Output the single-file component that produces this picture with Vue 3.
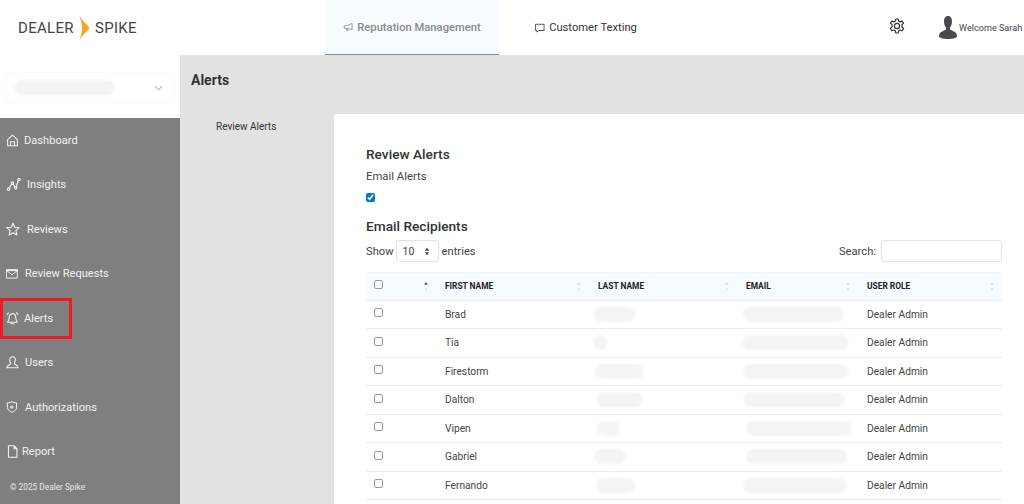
<template>
  <div class="page">
    <header class="topbar">
      <div class="logo">
        <span class="logo-left">DEALER</span>
        <svg class="logo-mark" viewBox="0 0 12 26" width="12" height="26">
          <path d="M1 0 C3 5 9 9 11.5 13 C9 17 3 21 1 26 C3 20 4 17 4 13 C4 9 3 6 1 0Z" fill="#f5a623" />
        </svg>
        <span>SPIKE</span>
      </div>
      <nav class="tabs">
        <a class="tab active">
          <svg viewBox="0 0 16 16" width="10" height="10" class="line">
            <path d="M14.5 3 V12 L5 10 H2 V6 H5 Z M5 10.5 L6 13.5 H8 L7.5 11" />
          </svg>
          Reputation Management
        </a>
        <a class="tab">
          <svg viewBox="0 0 16 16" width="10" height="10" class="line">
            <path d="M1.5 2 H14.5 V12 H6 L3 14.5 V12 H1.5 Z" />
          </svg>
          Customer Texting
        </a>
      </nav>
      <svg class="gear" viewBox="0 0 16 16" width="16" height="16">
        <circle cx="8" cy="8" r="2.6" />
        <path d="M6.8 1 H9.2 L9.6 3 L11.3 3.9 L13.2 3.1 L14.5 5.2 L13 6.6 V8.9 L14.6 10.5 L13.2 12.8 L11.3 12 L9.6 13 L9.2 15 H6.8 L6.4 13 L4.7 12 L2.8 12.8 L1.4 10.5 L3 8.9 V6.6 L1.5 5.2 L2.8 3.1 L4.7 3.9 L6.4 3 Z" />
      </svg>
      <div class="user">
        <svg viewBox="0 0 18 23" width="18" height="23">
          <path d="M9 0 C12 0 13 2.5 13 5.5 C13 8.5 11.8 10.5 11 11.5 V13.5 C13 15 18 15.5 18 20 C18 22 14 23 9 23 C4 23 0 22 0 20 C0 15.5 5 15 7 13.5 V11.5 C6.2 10.5 5 8.5 5 5.5 C5 2.5 6 0 9 0Z" fill="#4a4a4a" />
        </svg>
        <span>Welcome Sarah</span>
      </div>
    </header>

    <div class="body">
      <aside class="sidebar">
        <div class="dealer-pick">
          <div class="dealer-box">
            <span class="smudge dealer-smudge"></span>
            <svg viewBox="0 0 10 6" width="9" height="6" class="caret"><path d="M1 1 L5 5 L9 1" /></svg>
          </div>
        </div>
        <nav class="menu">
          <a v-for="item in menu" :key="item.label" class="menu-item" :style="{ gap: item.gap + 'px' }">
            <svg viewBox="0 0 16 16" :width="item.size" :height="item.size" class="line menu-icon">
              <path :d="item.icon" />
            </svg>
            {{ item.label }}
          </a>
          <div class="copyright">© 2025 Dealer Spike</div>
          <div class="highlight"></div>
        </nav>
      </aside>

      <main class="main">
        <h1 class="title">Alerts</h1>
        <div class="split">
          <div class="subnav">Review Alerts</div>
          <section class="card">
            <h2>Review Alerts</h2>
            <div class="label">Email Alerts</div>
            <input type="checkbox" class="check-on" checked />
            <h2 class="h-second">Email Recipients</h2>
            <div class="controls">
              <div class="show">
                <span>Show</span>
                <div class="length"><span>10</span>
                  <svg viewBox="0 0 8 12" width="6" height="9"><path d="M4 1 L7 5 H1Z M4 11 L1 7 H7Z" fill="#444" /></svg>
                </div>
                <span>entries</span>
              </div>
              <div class="search">Search: <div class="search-box"></div></div>
            </div>
            <div class="table">
              <div class="row head">
                <div class="cell">
                  <span class="box"></span>
                  <svg class="sort first" viewBox="0 0 4 10"><path d="M2 0 L4 3 H0Z" /><path class="down" d="M2 10 L0 7 H4Z" /></svg>
                </div>
                <div v-for="h in heads" :key="h" class="cell">
                  {{ h }}
                  <svg class="sort" viewBox="0 0 4 10"><path d="M2 0 L4 3 H0Z" /><path class="down" d="M2 10 L0 7 H4Z" /></svg>
                </div>
              </div>
              <div v-for="r in rows" :key="r.name" class="row">
                <div class="cell"><span class="box"></span></div>
                <div class="cell">{{ r.name }}</div>
                <div class="cell"><span class="smudge" :style="{ width: r.last + 'px', marginLeft: r.lastX + 'px' }"></span></div>
                <div class="cell"><span class="smudge" :style="{ width: r.email + 'px', marginLeft: r.emailX + 'px' }"></span></div>
                <div class="cell">Dealer Admin</div>
              </div>
            </div>
          </section>
        </div>
      </main>
    </div>
  </div>
</template>

<script setup>
const menu = [
  { label: 'Dashboard', gap: 5, size: 13, icon: 'M2 7 L8 1.5 L14 7 V14.5 H2 Z M5.5 14.5 V9.5 H10.5 V14.5' },
  { label: 'Insights', gap: 6, size: 15, icon: 'M1.5 13 a1.3 1.3 0 1 0 2.6 0 a1.3 1.3 0 1 0 -2.6 0 M3.5 11.8 L5.8 7.8 M5.5 6.5 a1.3 1.3 0 1 0 2.6 0 a1.3 1.3 0 1 0 -2.6 0 M7.6 7.6 L9.6 10.4 M9 11.5 a1.3 1.3 0 1 0 2.6 0 a1.3 1.3 0 1 0 -2.6 0 M11 10.4 L13 4 M12.5 2.7 a1.3 1.3 0 1 0 2.6 0 a1.3 1.3 0 1 0 -2.6 0' },
  { label: 'Reviews', gap: 7, size: 14, icon: 'M8 1.5 L10 6 L15 6.5 L11.3 9.8 L12.4 14.8 L8 12.2 L3.6 14.8 L4.7 9.8 L1 6.5 L6 6 Z' },
  { label: 'Review Requests', gap: 7, size: 12, icon: 'M1 2.5 H15 V13.5 H1 Z M1 3.5 L8 9 L15 3.5 M1 2.5 H15 M1 3.5 H15' },
  { label: 'Alerts', gap: 5, size: 13, icon: 'M8 2 C11 2 12 4.5 12 7 C12 10 13.5 11 14 12.5 H2 C2.5 11 4 10 4 7 C4 4.5 5 2 8 2Z M6 14.5 H10 M3 1 L1.5 3 M13 1 L14.5 3' },
  { label: 'Users', gap: 6, size: 13, icon: 'M8 1 C10.5 1 11.5 3 11.5 5 C11.5 7 10.5 8.5 10 9.5 C11 11 15 11 15 14.5 H1 C1 11 5 11 6 9.5 C5.5 8.5 4.5 7 4.5 5 C4.5 3 5.5 1 8 1Z' },
  { label: 'Authorizations', gap: 7, size: 12, icon: 'M2 2.5 C5 2.5 6 2 8 1 C10 2 11 2.5 14 2.5 V9 C14 12 11 14 8 15 C5 14 2 12 2 9 Z M6.8 6.8 H9.2 V9.2 H6.8 Z' },
  { label: 'Report', gap: 3, size: 13, icon: 'M3 1 H10 L13.5 4.5 V15 H3 Z M10 1 V4.5 H13.5' }
]

const heads = ['FIRST NAME', 'LAST NAME', 'EMAIL', 'USER ROLE']

const rows = [
  { name: 'Brad', last: 41, lastX: -4, email: 101, emailX: -3 },
  { name: 'Tia', last: 13, lastX: -4, email: 106, emailX: -4 },
  { name: 'Firestorm', last: 49, lastX: -3, email: 105, emailX: -3 },
  { name: 'Dalton', last: 47, lastX: -2, email: 101, emailX: -2 },
  { name: 'Vipen', last: 23, lastX: -1, email: 106, emailX: 0 },
  { name: 'Gabriel', last: 32, lastX: -4, email: 101, emailX: 0 },
  { name: 'Fernando', last: 39, lastX: -2, email: 104, emailX: -3 }
]
</script>

<style>
html, body { margin: 0; height: 100%; overflow: hidden; }
</style>

<style scoped>
.page {
  width: 1024px;
  height: 504px;
  overflow: hidden;
  display: flex;
  flex-direction: column;
  font-family: Roboto, "Liberation Sans", sans-serif;
  color: #444;
  background: #fff;
}

.topbar {
  height: 55px;
  flex: none;
  display: flex;
  align-items: center;
  background: #fff;
}
.logo {
  width: 325px;
  flex: none;
  box-sizing: border-box;
  padding-left: 18px;
  display: flex;
  align-items: center;
  font-size: 15px;
  letter-spacing: .3px;
  color: #444;
}
.logo-left { width: 60px; }
.logo-mark { margin-right: 5px; }
.tabs { display: flex; height: 100%; flex: none; }
.tab {
  display: flex;
  align-items: center;
  justify-content: center;
  gap: 4px;
  width: 174px;
  box-sizing: border-box;
  height: 100%;
  font-size: 11.2px;
  font-weight: 500;
  color: #333;
}
.tab:last-child { font-weight: 400; }
.tab.active {
  background: #f5fbff;
  color: #8a8a8a;
  border-bottom: 1.5px solid #8a8a8a;
}
.line { fill: none; stroke: currentColor; stroke-width: 1.3; stroke-linejoin: round; stroke-linecap: round; }
.gear { flex: none; margin-left: 216px; margin-bottom: 3px; fill: none; stroke: #333; stroke-width: 1.2; stroke-linejoin: round; }
.user {
  flex: none;
  margin-left: 34px;
  display: flex;
  align-items: center;
  gap: 2px;
  font-size: 9.1px;
  color: #444;
  white-space: nowrap;
}

.body { flex: 1; display: flex; min-height: 0; }
.sidebar { width: 180px; flex: none; display: flex; flex-direction: column; }
.dealer-pick { height: 63px; flex: none; padding: 17px 5px 0; box-sizing: border-box; }
.dealer-box {
  height: 29px;
  border: 1px solid #fbfbfb;
  border-radius: 4px;
  display: flex;
  align-items: center;
  justify-content: space-between;
  padding: 0 11px 0 9px;
}
.dealer-smudge { width: 100px; height: 17px; }
.caret { fill: none; stroke: #888; stroke-width: 1; margin-top: 1px; }

.menu {
  flex: 1;
  position: relative;
  background: #7f7f7f;
  color: #f2f2f2;
  padding: 0 0 0 6px;
  font-size: 11.1px;
}
.menu-item { height: 44.5px; display: flex; align-items: center; }
.menu-icon { flex: none; stroke-width: 1.3; }
.copyright { font-size: 8.3px; color: #e8e8e8; margin: 8px 0 0 4px; }
.highlight {
  position: absolute;
  left: 0;
  top: 180px;
  width: 72px;
  height: 41px;
  box-sizing: border-box;
  border: 3px solid #ed1c24;
}

.main { flex: 1; display: flex; flex-direction: column; background: #e2e2e2; min-width: 0; }
.title {
  height: 59px;
  flex: none;
  box-sizing: border-box;
  margin: 0;
  padding: 17px 0 0 11px;
  font-size: 14px;
  font-weight: 700;
  color: #333;
}
.split { flex: 1; display: flex; min-height: 0; }
.subnav {
  width: 154px;
  flex: none;
  box-sizing: border-box;
  padding: 7px 0 0 36px;
  font-size: 10px;
  color: #333;
}
.card {
  flex: 1;
  background: #fff;
  border-top-left-radius: 3px;
  padding: 32px 22px 0 32px;
  min-width: 0;
}
h2 { margin: 0; font-size: 13.7px; font-weight: 500; color: #333; line-height: 16px; }
.label { font-size: 11.3px; color: #444; margin-top: 8px; line-height: 14px; }
.check-on {
  display: block;
  width: 9px;
  height: 9px;
  margin: 9px 0 0;
  accent-color: #0075d8;
}
.h-second { margin-top: 16px; }
.controls {
  display: flex;
  justify-content: space-between;
  align-items: center;
  margin-top: 6px;
  height: 22px;
  font-size: 11.2px;
}
.show { display: flex; align-items: center; gap: 2px; }
.length {
  width: 43px;
  height: 22px;
  box-sizing: border-box;
  border: 1px solid #e2e2e2;
  border-radius: 3px;
  display: flex;
  align-items: center;
  justify-content: space-between;
  padding: 0 8px 0 6px;
  margin-right: 1px;
  font-size: 10.5px;
}
.search { display: flex; align-items: center; gap: 5px; }
.search-box {
  width: 121px;
  height: 22px;
  box-sizing: border-box;
  border: 1px solid #e2e2e2;
  border-radius: 3px;
}

.table { margin-top: 10px; }
.row {
  display: grid;
  grid-template-columns: 70px 153px 148px 121px 144px;
  height: 28.5px;
  box-sizing: border-box;
  border-bottom: 1px solid #ececec;
  font-size: 10.2px;
  color: #444;
}
.row.head {
  background: #f5fbff;
  font-size: 8.4px;
  font-weight: 700;
  color: #222;
  border-top: 1px solid #f0f6fa;
}
.cell {
  position: relative;
  display: flex;
  align-items: center;
  padding-left: 9px;
  min-width: 0;
}
.row .cell:first-child { padding-left: 8px; }
.box {
  width: 9px;
  height: 9px;
  box-sizing: border-box;
  border: 1px solid #999;
  border-radius: 2px;
  margin-top: -3px;
}
.sort {
  position: absolute;
  right: 8px;
  top: 9px;
  width: 4px;
  height: 9px;
  fill: #d8d8d8;
}
.sort .down { fill: #e4e4e4; }
.sort.first { fill: #555; }
.smudge {
  display: block;
  height: 15px;
  border-radius: 8px;
  background: #f4f4f4;
  filter: blur(1px);
}
</style>
